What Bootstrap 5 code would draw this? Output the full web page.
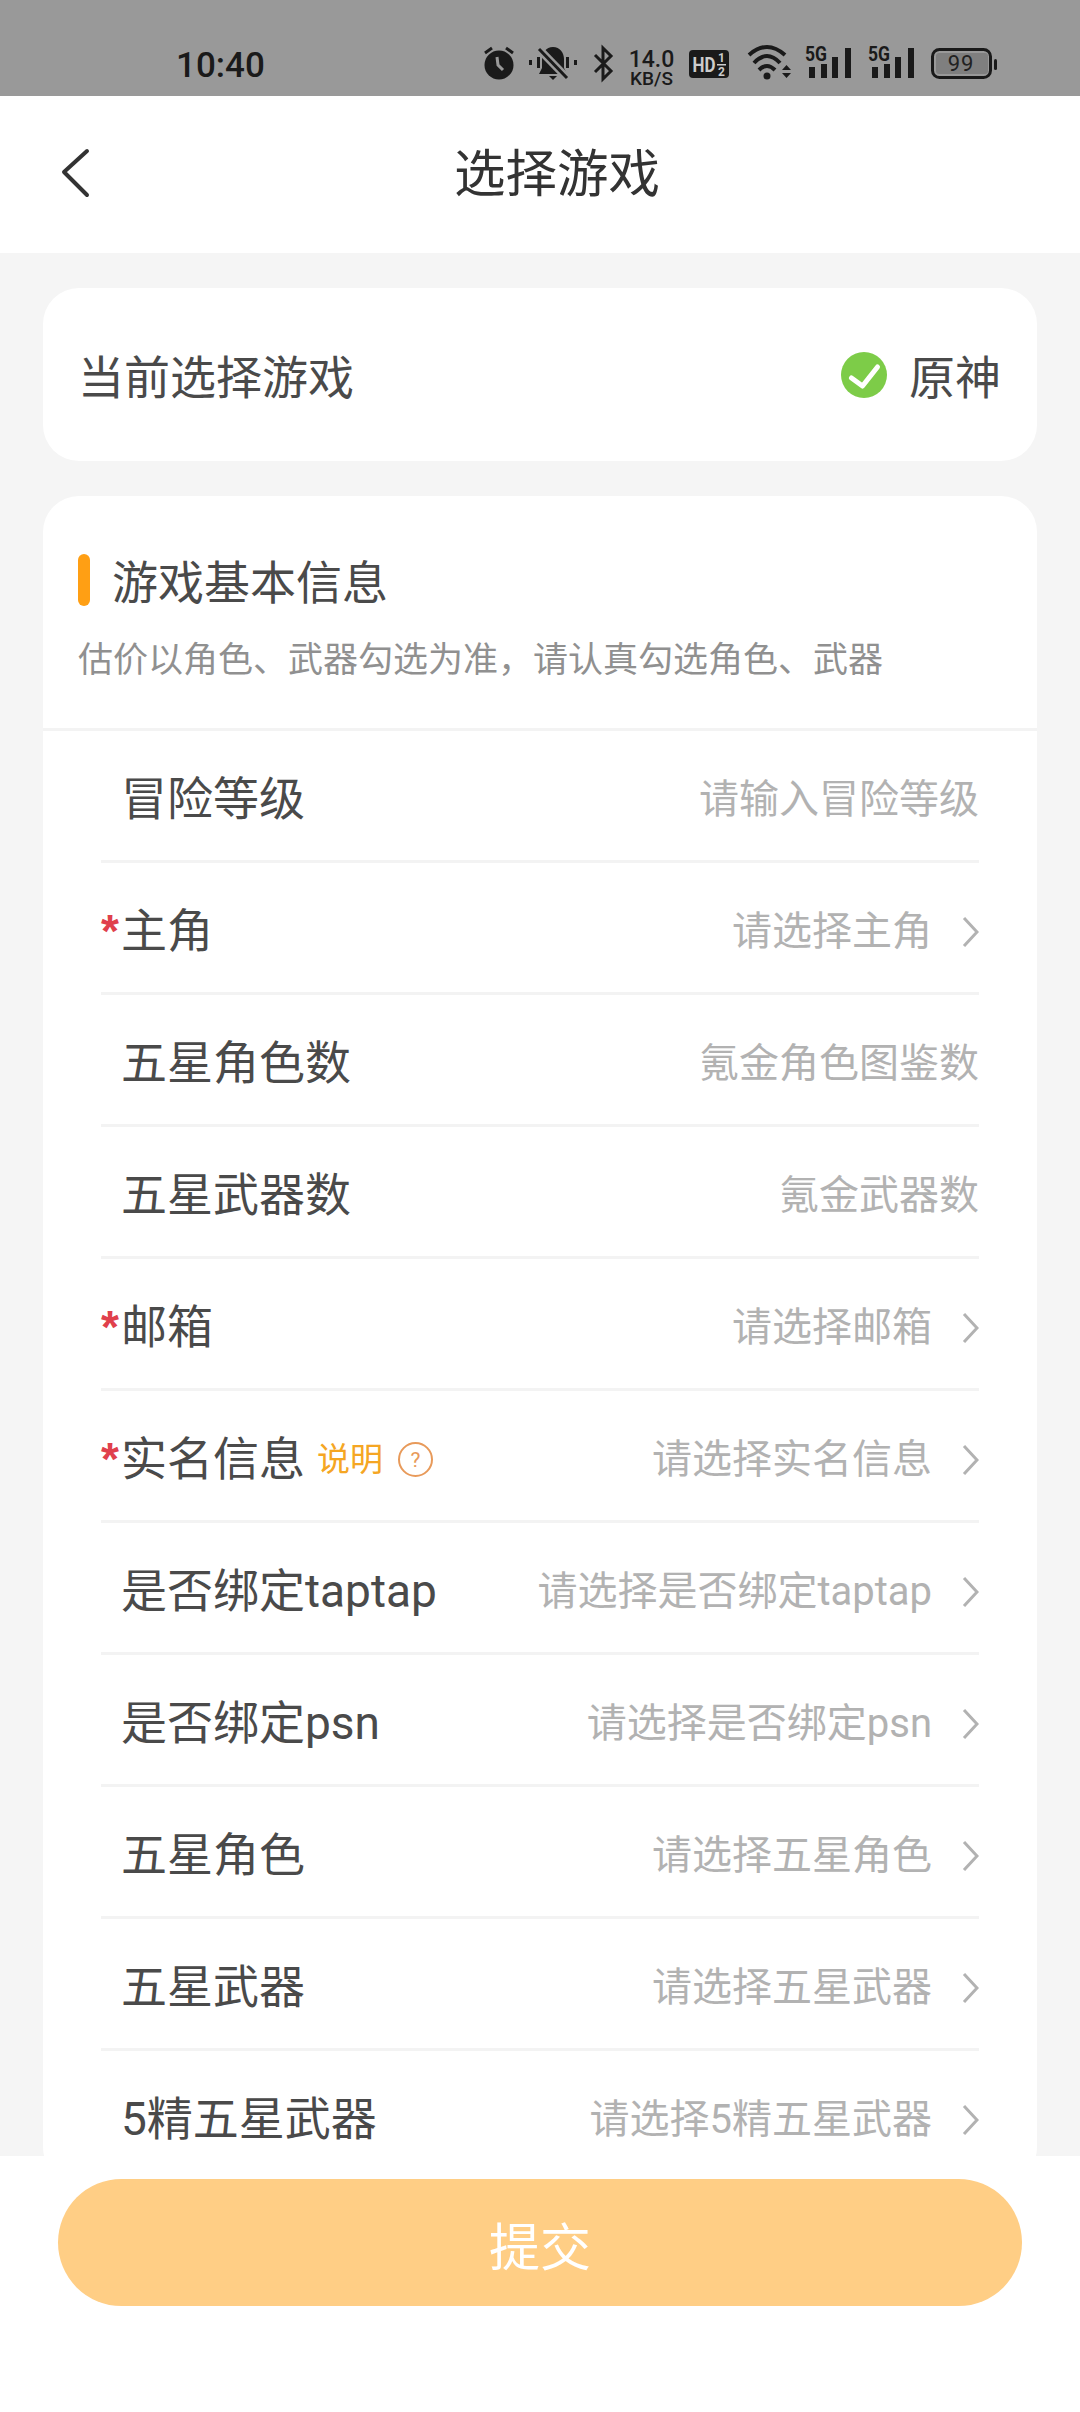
<!DOCTYPE html>
<html lang="zh-CN">
<head>
  <meta charset="UTF-8">
  <meta name="viewport" content="width=device-width, initial-scale=1.0">
  <title>选择游戏</title>
  <link href="https://cdn.jsdelivr.net/npm/bootstrap@5.3.0/dist/css/bootstrap.min.css" rel="stylesheet">
  <style>
    body { background: #f5f5f5; font-family: Roboto, "Noto Sans CJK SC", sans-serif; color: #4a4a4a; }
    .page-wrap { height: 2412px; width: 1080px; }

    .status-strip { height: 96px; background: #999; color: #1a1a1a; padding: 45px 83px 0 176px; }
    .status-time { font-size: 35px; line-height: 41px; font-weight: 500; }
    .status-icons svg { display: block; height: 36px; overflow: visible; }
    .net-speed { width: 45px; margin-left: 15px; }
    .net-speed b { font-size: 23px; line-height: 22px; font-weight: 500; }
    .net-speed i { font-size: 19px; line-height: 15px; font-style: normal; font-weight: 500; }
    .ic-bell { margin-left: 14px; }
    .ic-bt { margin-left: 16px; }
    .ic-hd { margin-left: 15px; }
    .ic-wifi { margin-left: 18px; }
    .ic-sim { margin-left: 14px; }
    .ic-sim + .ic-sim { margin-left: 17px; }
    .ic-batt { margin-left: 17px; }

    .title-bar { height: 157px; background: #fff; padding-left: 34px; }
    .title-bar h1 { font-size: 51.5px; font-weight: 400; color: #333; margin: 0; }
    .back-btn { left: 60px; top: 52px; }

    .scroll-area { padding: 35px 43px 0; }
    .panel { border-radius: 36px; background: #fff; border: 0; }
    .panel-current { height: 173px; padding: 0 36px 0 35px; margin-bottom: 35px; font-size: 46px; color: #4a4a4a; }
    .panel-current .low-text { padding-top: 8px; }
    .check-ic { margin-right: 22px; }

    .panel-head { height: 235px; padding: 58px 35px 0; border-bottom: 3px solid #f3f3f3; }
    .head-bar { width: 12px; height: 52px; border-radius: 6px; background: #ff9f14; margin-right: 22px; }
    .head-title { font-size: 46px; line-height: 52px; color: #4a4a4a; margin-top: 3px; }
    .head-note { font-size: 35px; line-height: 50px; color: #909090; margin-top: 27px; white-space: nowrap; }

    .form-rows { padding: 0 58px; }
    .form-rows .form-line { height: 132px; border-width: 0 0 3px; border-style: solid; border-color: #f3f3f3; border-radius: 0; padding: 8px 0 0; background: none; }
    .form-rows .form-line:last-child { border-bottom-width: 0; padding-bottom: 3px; }
    .line-label { font-size: 46px; color: #4a4a4a; white-space: nowrap; }
    .req-mark { width: 20px; flex: none; color: #e0404c; font-family: "Liberation Sans", sans-serif; font-weight: 700; }
    .line-value { font-size: 40px; color: #b2b2b2; white-space: nowrap; }
    .line-arrow { margin-left: 30px; flex: none; }
    .help-link { font-size: 33px; color: #f5a623; margin-left: 12px; }
    .help-ic { margin-left: 15px; }

    .bottom-bar { height: 256px; background: #fff; padding: 23px 58px 0 58px; }
    .submit-btn { height: 127px; width: 100%; border: 0; border-radius: 64px; background: #ffce85; color: #fff; font-size: 51px; padding: 14px 0 0; }
  </style>
</head>
<body>
  <div class="page-wrap d-flex flex-column overflow-hidden">

    <div class="status-strip d-flex justify-content-between flex-shrink-0">
      <div class="status-time">10:40</div>
      <div class="status-icons d-flex align-items-start">
        <svg width="32" viewBox="0 0 32 36"><circle cx="16" cy="20" r="14.5" fill="#1a1a1a"/><path d="M2 8l7-5M30 8l-7-5" stroke="#1a1a1a" stroke-width="3" fill="none"/><path d="M14 12l1 8 5 5" stroke="#999" stroke-width="3" fill="none"/></svg>
        <svg class="ic-bell" width="48" viewBox="0 0 48 36"><path d="M24 2c-7 0-11 6-11 12v9l-3 6h28l-3-6v-9c0-6-4-12-11-12z" fill="#1a1a1a"/><path d="M20 31h8l-4 4z" fill="#1a1a1a"/><path d="M9 3l30 31" stroke="#999" stroke-width="8"/><path d="M10 4l28 29" stroke="#1a1a1a" stroke-width="3"/><path d="M0 15h3v5H0zM8 12h3v11H8zM37 12h3v11h-3zM45 15h3v5h-3z" fill="#1a1a1a"/></svg>
        <svg class="ic-bt" width="21" viewBox="0 0 21 36"><path d="M2 10l16 16-8 8V3l8 8L2 27" stroke="#1a1a1a" stroke-width="3" fill="none"/></svg>
        <div class="net-speed d-flex flex-column align-items-center">
          <b class="mt-1">14.0</b>
          <i>KB/S</i>
        </div>
        <svg class="ic-hd" width="40" viewBox="0 0 40 36"><rect y="5" width="40" height="28" rx="4" fill="#1a1a1a"/><text x="3.5" y="27" font-family="Roboto" font-weight="700" font-size="21" fill="#ccc" textLength="23" lengthAdjust="spacingAndGlyphs">HD</text><text x="29" y="17" font-family="Roboto" font-weight="700" font-size="12" fill="#ccc">1</text><rect x="28" y="19" width="9" height="1.5" fill="#ccc"/><text x="29" y="31" font-family="Roboto" font-weight="700" font-size="12" fill="#ccc">2</text></svg>
        <svg class="ic-wifi" width="44" viewBox="0 0 44 36"><path d="M2 10Q20-6 38 10M7 18Q20 4 33 18M12 25q8-8 16 0" stroke="#1a1a1a" stroke-width="4" fill="none"/><circle cx="20" cy="31" r="3.5" fill="#1a1a1a"/><path d="M35 25l4.500-5 4.500 5zM35 28h9l-4.500 5z" fill="#1a1a1a"/></svg>
        <svg class="ic-sim" width="46" viewBox="0 0 46 36"><text x="0" y="16" font-family="Roboto" font-weight="700" font-size="20" fill="#1a1a1a" textLength="22" lengthAdjust="spacingAndGlyphs">5G</text><path d="M4 22h6v11H4zM16 19h6v14h-6zM27 12h6v21h-6zM40 3h6v30h-6z" fill="#1a1a1a"/></svg>
        <svg class="ic-sim" width="46" viewBox="0 0 46 36"><text x="0" y="16" font-family="Roboto" font-weight="700" font-size="20" fill="#1a1a1a" textLength="22" lengthAdjust="spacingAndGlyphs">5G</text><path d="M4 22h6v11H4zM16 19h6v14h-6zM27 12h6v21h-6zM40 3h6v30h-6z" fill="#1a1a1a"/></svg>
        <svg class="ic-batt" width="66" viewBox="0 0 66 36"><rect x="1.500" y="4.500" width="58" height="28" rx="7" stroke="#1a1a1a" stroke-width="3" fill="none"/><rect x="5" y="8" width="52" height="21" rx="3" fill="#7f7f7f"/><text x="30" y="26" text-anchor="middle" font-family="Roboto" font-size="22" letter-spacing="1" fill="#222">99</text><rect x="63" y="14" width="3" height="11" rx="1.500" fill="#1a1a1a"/></svg>
      </div>
    </div>

    <div class="title-bar d-flex align-items-center justify-content-center position-relative flex-shrink-0">
      <svg class="back-btn position-absolute" width="30" height="50" viewBox="0 0 30 50"><path d="M27 3L4 24l23 23" stroke="#333" stroke-width="4" stroke-linecap="round" stroke-linejoin="round" fill="none"/></svg>
      <h1>选择游戏</h1>
    </div>

    <div class="scroll-area flex-grow-1 overflow-hidden">
      <div class="panel panel-current card flex-row align-items-center justify-content-between">
        <span class="low-text">当前选择游戏</span>
        <span class="d-flex align-items-center">
          <svg class="check-ic" width="46" height="46" viewBox="0 0 46 46"><circle cx="23" cy="23" r="23" fill="#7dcc48"/><path d="M10.500 26l11 8 15-19" stroke="#fff" stroke-width="5" stroke-linecap="round" stroke-linejoin="round" fill="none"/></svg>
          <span class="low-text">原神</span>
        </span>
      </div>

      <div class="panel card">
        <div class="panel-head">
          <div class="d-flex align-items-start">
            <div class="head-bar"></div>
            <div class="head-title">游戏基本信息</div>
          </div>
          <div class="head-note">估价以角色、武器勾选为准，请认真勾选角色、武器</div>
        </div>

        <div class="form-rows list-group list-group-flush" id="formRows"></div>
      </div>
    </div>

    <div class="bottom-bar flex-shrink-0">
      <button type="button" class="submit-btn btn">提交</button>
    </div>
  </div>

  <script>
    const rows = [
      { label: '冒险等级', value: '请输入冒险等级' },
      { label: '主角', value: '请选择主角', req: true, arrow: true },
      { label: '五星角色数', value: '氪金角色图鉴数' },
      { label: '五星武器数', value: '氪金武器数' },
      { label: '邮箱', value: '请选择邮箱', req: true, arrow: true },
      { label: '实名信息', value: '请选择实名信息', req: true, arrow: true, help: true },
      { label: '是否绑定taptap', value: '请选择是否绑定taptap', arrow: true },
      { label: '是否绑定psn', value: '请选择是否绑定psn', arrow: true },
      { label: '五星角色', value: '请选择五星角色', arrow: true },
      { label: '五星武器', value: '请选择五星武器', arrow: true },
      { label: '5精五星武器', value: '请选择5精五星武器', arrow: true },
    ];

    const arrowSvg = '<svg class="line-arrow" width="17" height="32" viewBox="0 0 17 32"><path d="M2 2l13 14L2 30" stroke="#b2b2b2" stroke-width="3" fill="none"/></svg>';
    const helpHtml = '<span class="help-link">说明</span><svg class="help-ic" width="35" height="35" viewBox="0 0 35 35"><circle cx="17.500" cy="17.500" r="16.500" stroke="#e89a5a" stroke-width="2" fill="none"/><text x="17.500" y="25" text-anchor="middle" font-family="Roboto" font-size="21" fill="#e89a5a">?</text></svg>';

    document.getElementById('formRows').innerHTML = rows.map((r) => `
      <div class="form-line list-group-item d-flex align-items-center justify-content-between">
        <div class="line-label d-flex align-items-center">
          <span class="req-mark">${r.req ? '*' : ''}</span>${r.label}${r.help ? helpHtml : ''}
        </div>
        <div class="d-flex align-items-center">
          <span class="line-value">${r.value}</span>${r.arrow ? arrowSvg : ''}
        </div>
      </div>`).join('');
  </script>
  <script src="https://cdn.jsdelivr.net/npm/bootstrap@5.3.0/dist/js/bootstrap.bundle.min.js"></script>
</body>
</html>
